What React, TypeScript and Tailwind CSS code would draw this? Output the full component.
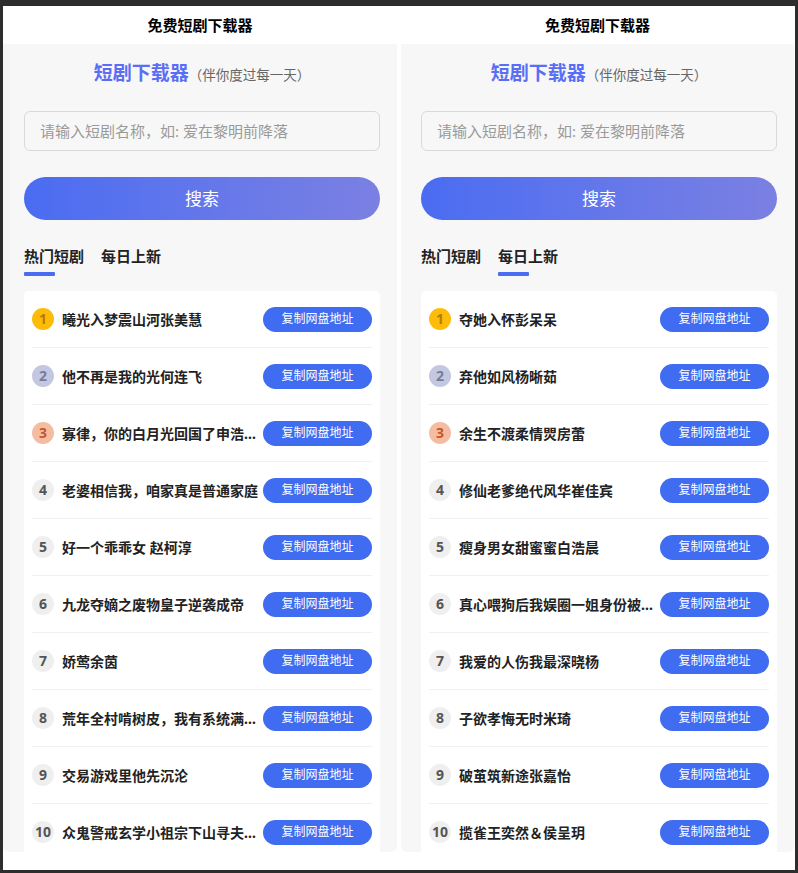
import React from "react";

const leftItems: string[] = [
  "曦光入梦震山河张美慧",
  "他不再是我的光何连飞",
  "寡律，你的白月光回国了申浩林子",
  "老婆相信我，咱家真是普通家庭",
  "好一个乖乖女 赵柯淳",
  "九龙夺嫡之废物皇子逆袭成帝",
  "娇莺余茵",
  "荒年全村啃树皮，我有系统满仓粮",
  "交易游戏里他先沉沦",
  "众鬼警戒玄学小祖宗下山寻夫婿啦",
];

const rightItems: string[] = [
  "夺她入怀彭呆呆",
  "弃他如风杨晰茹",
  "余生不渡柔情焸房蕾",
  "修仙老爹绝代风华崔佳宾",
  "瘦身男女甜蜜蜜白浩晨",
  "真心喂狗后我娱圈一姐身份被曝光",
  "我爱的人伤我最深晓杨",
  "子欲孝悔无时米琦",
  "破茧筑新途张嘉怡",
  "揽雀王奕然＆侯呈玥",
];

function Badge({ n }: { n: number }) {
  let cls = "bg-[#efefef] text-[#555555]";
  if (n === 1) cls = "bg-[#fdbb0a] text-[#b57b00]";
  else if (n === 2) cls = "bg-[#c4c7e0] text-[#767b9c]";
  else if (n === 3) cls = "bg-[#f4bda2] text-[#c4572a]";
  return (
    <div
      className={`w-[22px] h-[22px] shrink-0 rounded-full flex items-center justify-center text-[14px] font-bold leading-none ${cls}`}
    >
      {n}
    </div>
  );
}

function Column({
  items,
  active,
  padLeft,
  width,
}: {
  items: string[];
  active: 0 | 1;
  padLeft: string;
  width: string;
}) {
  return (
    <div
      className={`${width} ${padLeft} pr-[17px] h-full bg-[#f7f7f7] rounded-b-[6px] overflow-hidden flex flex-col pt-[15px]`}
    >
      <div className="flex items-baseline justify-center h-[28px]">
        <span className="text-[19px] font-bold text-[#5a6ef5] leading-[28px]">短剧下载器</span>
        <span className="text-[13.5px] text-[#666666]">（伴你度过每一天）</span>
      </div>
      <div className="mt-[24px] h-[40px] rounded-[6px] border border-[#d9d9d9] bg-[#f7f7f7] flex items-center pl-[15px] text-[15px] text-[#9a9a9a]">
        请输入短剧名称，如: 爱在黎明前降落
      </div>
      <div className="mt-[26px] h-[43px] rounded-full bg-gradient-to-r from-[#4a6cf2] to-[#7b80e2] flex items-center justify-center text-white text-[17px]">
        搜索
      </div>
      <div className="mt-[25px] flex gap-[17px]">
        <div className="flex flex-col items-start">
          <span className="text-[15px] font-semibold text-[#222222] leading-[22px]">热门短剧</span>
          <div
            className={`mt-[5px] w-[31px] h-[4px] rounded-[1px] ${active === 0 ? "bg-[#4a6cf2]" : "bg-transparent"}`}
          />
        </div>
        <div className="flex flex-col items-start">
          <span className="text-[15px] font-semibold text-[#222222] leading-[22px]">每日上新</span>
          <div
            className={`mt-[5px] w-[31px] h-[4px] rounded-[1px] ${active === 1 ? "bg-[#4a6cf2]" : "bg-transparent"}`}
          />
        </div>
      </div>
      <div className="mt-[15px] flex-1 bg-white rounded-t-[5px] px-[8px] overflow-hidden">
        {items.map((t, i) => (
          <div
            key={i}
            className="h-[57px] flex items-center border-b border-[#f1f1f1]"
          >
            <Badge n={i + 1} />
            <div className="ml-[8px] flex-1 min-w-0 truncate text-[14px] font-bold text-[#222222]">
              {t}
            </div>
            <div className="w-[109px] h-[25px] shrink-0 rounded-full bg-[#3f6cf0] text-white text-[12px] flex items-center justify-center">
              复制网盘地址
            </div>
          </div>
        ))}
      </div>
    </div>
  );
}

export default function App() {
  return (
    <div
      className="w-[798px] h-[873px] bg-[#2d2d2d] pt-[6px] pl-[3px] pr-[3px] pb-[3px]"
      style={{ fontFamily: '"Noto Sans", "Noto Sans CJK SC", sans-serif' }}
    >
      <div className="w-full h-full bg-white flex flex-col">
        <div className="h-[38px] flex shrink-0">
          <div className="w-[394px] flex items-center justify-center text-[15px] font-bold text-black">
            免费短剧下载器
          </div>
          <div className="w-[4px]" />
          <div className="w-[393px] flex items-center justify-center text-[15px] font-bold text-black">
            免费短剧下载器
          </div>
        </div>
        <div className="flex h-[808px]">
          <Column items={leftItems} active={0} padLeft="pl-[21px]" width="w-[394px]" />
          <div className="w-[4px]" />
          <Column items={rightItems} active={1} padLeft="pl-[20px]" width="w-[393px]" />
        </div>
      </div>
    </div>
  );
}
